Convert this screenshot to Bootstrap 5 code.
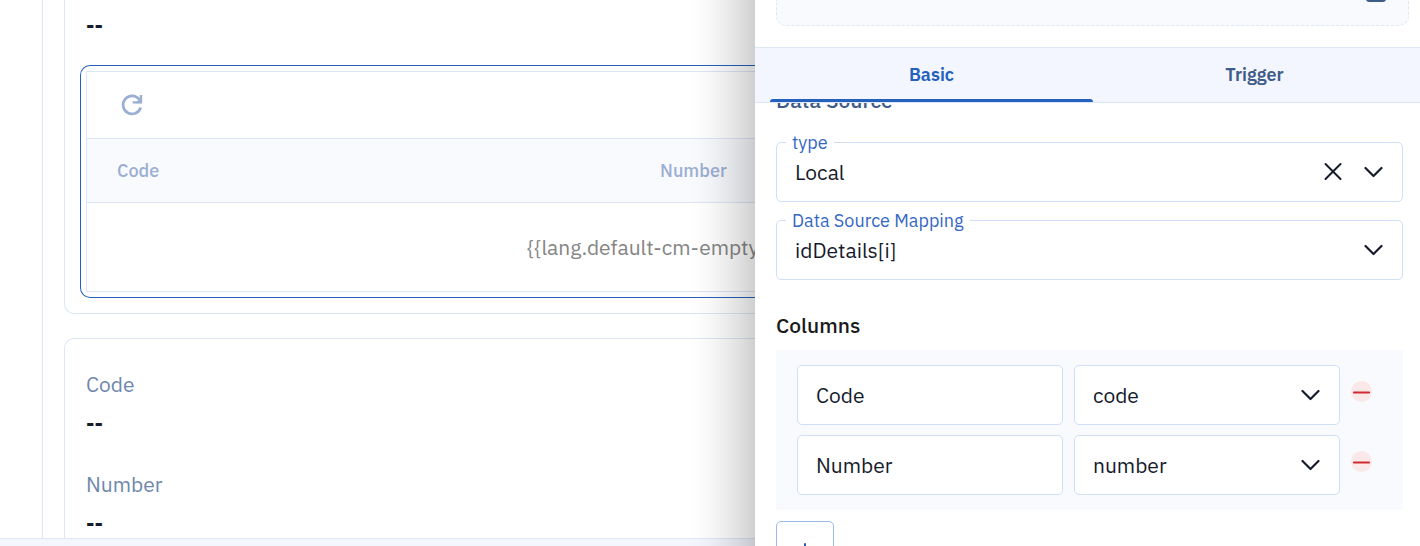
<!DOCTYPE html>
<html lang="en">
<head>
<meta charset="utf-8">
<meta name="viewport" content="width=device-width, initial-scale=1">
<title>Table settings</title>
<link href="https://cdn.jsdelivr.net/npm/bootstrap@5.3.0/dist/css/bootstrap.min.css" rel="stylesheet">
<style>
  :root { --line: #dde6f5; --field: #d0dff8; --ink: #161b2c; --blue: #2460bd; --slate: #3f5b87; --tint: #f9fafe; }
  body { font-family: "IBM Plex Sans", Roboto, sans-serif; font-size: 21px; line-height: 30px; color: var(--ink); }
  .rail { width: 43px; border-right: 1px solid var(--line); }
  .canvas-area { padding-left: 21px; }
  .panel-box { border: 1px solid var(--line); border-right: 0; border-radius: 10px 0 0 10px; padding-left: 21px; }
  .panel-box.scrolled { border-top: 0; border-radius: 0 0 0 10px; padding-top: 10px; padding-bottom: 15px; }
  .panel-box.fields { padding-top: 30px; padding-bottom: 30px; }
  .selected-box { border: 1px solid var(--blue); border-right: 0; border-radius: 10px 0 0 10px; padding: 5px 0 5px 5px; margin: 25px 0 0 -6px; }
  .grid-box { border: 1px solid var(--line); border-right: 0; }
  .grid-toolbar { height: 66px; padding-left: 32px; }
  .data-grid { table-layout: fixed; }
  .data-grid th { height: 64px; padding: 0 0 0 30px; background: var(--tint); border-top: 1px solid var(--line); border-bottom: 1px solid var(--line); color: #9bafd2; font-size: 18px; font-weight: 500; }
  .data-grid td { height: 88px; padding: 0 0 0 440px; color: #858585; border: 0; white-space: nowrap; }
  .field-name { color: #6f87ae; margin-bottom: 9px; }
  .field-value { font-weight: 700; }
  .field-value + .field-name { margin-top: 31px; }
  .foot-strip { height: 8px; background: #f3f6fd; border-top: 1px solid var(--line); }
  .drawer { width: 46.83%; z-index: 2; }
  .drawer::before { content: ""; position: absolute; inset: 0 100% 0 auto; width: 68px; pointer-events: none;
    background: linear-gradient(to left, rgba(0,0,0,.19), rgba(0,0,0,.13) 20%, rgba(0,0,0,.075) 42%, rgba(0,0,0,.03) 65%, rgba(0,0,0,.008) 85%, transparent); }
  .drop-area { height: 26px; margin: 0 11px 21px 21px; background: var(--tint); border: 1px dashed var(--line); border-top: 0; border-radius: 0 0 10px 10px; padding-right: 22px; }
  .tab-strip { background: #f3f6fe; border-top: 1px solid var(--line); border-bottom: 1px solid var(--line); padding: 0 4px 0 15px; }
  .tab-strip .nav-link { height: 54px; padding: 0; border: 0; background: none; font-size: 18px; font-weight: 600; color: var(--slate); border-radius: 0; }
  .tab-strip .nav-link.active { position: relative; color: var(--blue); }
  .tab-strip .nav-link.active::after { content: ""; position: absolute; inset: auto 0 0 0; height: 3px; background: var(--blue); border-radius: 3px 3px 0 0; }
  .drawer-body { padding: 0 17px 0 21px; }
  .section-head { margin-top: -18px; margin-bottom: 27px; color: var(--slate); }
  .section-head h2, .cols-title { font-size: 21px; line-height: 30px; font-weight: 500; }
  .cols-title { color: #1a1a1a; margin: 30px 0 10px; }
  .field-gap { margin-bottom: 18px; }
  .form-control, .form-select { height: 60px; border: 1px solid var(--field); border-radius: 5px; padding: 0 18px; font-size: 21px; color: var(--ink); background-color: #fff; }
  .form-select { padding: 2px 50px 0 18px; background-size: 20px 20px; background-position: right 19px center; background-image: url("data:image/svg+xml,%3Csvg xmlns='http://www.w3.org/2000/svg' viewBox='0 0 20 20'%3E%3Cpath d='M2.500 6l8 8 8-8' fill='none' stroke='%23161b2c' stroke-width='2.2' stroke-linecap='round' stroke-linejoin='round'/%3E%3C/svg%3E"); }
  .float-name { position: absolute; top: -13px; left: 10px; padding: 0 6px; background: #fff; color: #3468c4; font-size: 18px; line-height: 28px; }
  .clear-btn { position: absolute; right: 60px; top: 20px; }
  .plain-btn { border: 0; padding: 0; background: none; line-height: 0; }
  .cols-box { background: var(--tint); padding: 15px 31px 15px 21px; row-gap: 10px; }
  .col-row { display: grid; grid-template-columns: 1fr 1fr 21px; column-gap: 11px; }
  .minus-btn { margin-top: 16px; }
  .add-btn { width: 58px; height: 58px; border: 1px solid #9db8ea; border-radius: 5px; background: #fff; margin-top: 11px; padding: 0; }
</style>
</head>
<body>
<div class="d-flex vh-100 overflow-hidden">
  <main class="d-flex flex-column flex-fill overflow-hidden">
    <div class="d-flex flex-fill overflow-hidden">
      <div class="rail flex-shrink-0"></div>
      <div class="canvas-area flex-fill">
        <section class="panel-box scrolled mb-4">
          <div class="field-value">--</div>
          <div class="selected-box">
            <div class="grid-box">
              <div class="grid-toolbar d-flex align-items-center">
                <button class="plain-btn" aria-label="Refresh">
                  <svg width="26" height="26" viewBox="0 0 26 26" fill="none" stroke="#9bafd2" stroke-width="2.7"><path d="M21.7 15.500A9 9 0 1 1 20.300 7.500"/><path d="M23.200 3h-2.400v6.200h-7.200v2.400h9.600z" fill="#9bafd2" stroke="none"/><path d="M22.400 5v6.200h-6z" fill="#9bafd2" stroke="none"/></svg>
                </button>
              </div>
              <table class="data-grid w-100">
                <colgroup><col style="width:81.3%"><col></colgroup>
                <thead><tr><th scope="col">Code</th><th scope="col">Number</th></tr></thead>
                <tbody><tr><td colspan="2">{{lang.default-cm-empty</td></tr></tbody>
              </table>
            </div>
          </div>
        </section>
        <section class="panel-box fields">
          <div class="field-name">Code</div>
          <div class="field-value">--</div>
          <div class="field-name">Number</div>
          <div class="field-value">--</div>
        </section>
      </div>
    </div>
    <footer class="foot-strip flex-shrink-0"></footer>
  </main>

  <aside class="drawer bg-white flex-shrink-0 d-flex flex-column position-relative">
    <div class="drop-area d-flex justify-content-end flex-shrink-0">
      <svg width="20" height="3" viewBox="0 0 20 3"><path d="M0 0h20q-1 2-3 2H3Q1 2 0 0z" fill="#3f5b87"/></svg>
    </div>
    <nav class="tab-strip nav nav-justified flex-nowrap flex-shrink-0" role="tablist">
      <div class="nav-item"><button class="nav-link active w-100" role="tab" aria-selected="true">Basic</button></div>
      <div class="nav-item"><button class="nav-link w-100" role="tab" aria-selected="false">Trigger</button></div>
    </nav>
    <div class="drawer-body flex-fill overflow-hidden">
      <div class="section-head d-flex justify-content-between align-items-center">
        <h2 class="m-0">Data Source</h2>
        <svg class="me-2" width="24" height="24" viewBox="0 0 24 24" fill="none" stroke="#3f4653" stroke-width="2" stroke-linecap="round"><path d="M4 14l8-8 8 8"/></svg>
      </div>
      <div class="position-relative field-gap">
        <select class="form-select" id="type"><option>Local</option></select>
        <label class="float-name" for="type">type</label>
        <button class="plain-btn clear-btn" aria-label="Clear type">
          <svg width="20" height="20" viewBox="0 0 20 20" fill="none" stroke="#161b2c" stroke-width="2" stroke-linecap="round"><path d="M2.500 2l15 15M17.500 2l-15 15"/></svg>
        </button>
      </div>
      <div class="position-relative">
        <select class="form-select" id="mapping"><option>idDetails[i]</option></select>
        <label class="float-name" for="mapping">Data Source Mapping</label>
      </div>
      <h3 class="cols-title">Columns</h3>
      <div class="cols-box d-grid">
        <div class="col-row">
          <input class="form-control" value="Code" aria-label="Column title">
          <select class="form-select" aria-label="Column field"><option>code</option></select>
          <button class="plain-btn minus-btn align-self-start" aria-label="Remove column">
            <svg width="21" height="21" viewBox="0 0 21 21"><circle cx="10.500" cy="10.500" r="10.500" fill="#fbe8e9"/><path d="M3 11.500h15" stroke="#cf2a30" stroke-width="2.200" stroke-linecap="round"/></svg>
          </button>
        </div>
        <div class="col-row">
          <input class="form-control" value="Number" aria-label="Column title">
          <select class="form-select" aria-label="Column field"><option>number</option></select>
          <button class="plain-btn minus-btn align-self-start" aria-label="Remove column">
            <svg width="21" height="21" viewBox="0 0 21 21"><circle cx="10.500" cy="10.500" r="10.500" fill="#fbe8e9"/><path d="M3 11.500h15" stroke="#cf2a30" stroke-width="2.200" stroke-linecap="round"/></svg>
          </button>
        </div>
      </div>
      <button class="add-btn" aria-label="Add column">
        <svg width="20" height="20" viewBox="0 0 20 20" stroke="#2f55b5" stroke-width="2" stroke-linecap="round"><path d="M10 1v18M1 10h18"/></svg>
      </button>
    </div>
  </aside>
</div>
<script src="https://cdn.jsdelivr.net/npm/bootstrap@5.3.0/dist/js/bootstrap.bundle.min.js"></script>
</body>
</html>
